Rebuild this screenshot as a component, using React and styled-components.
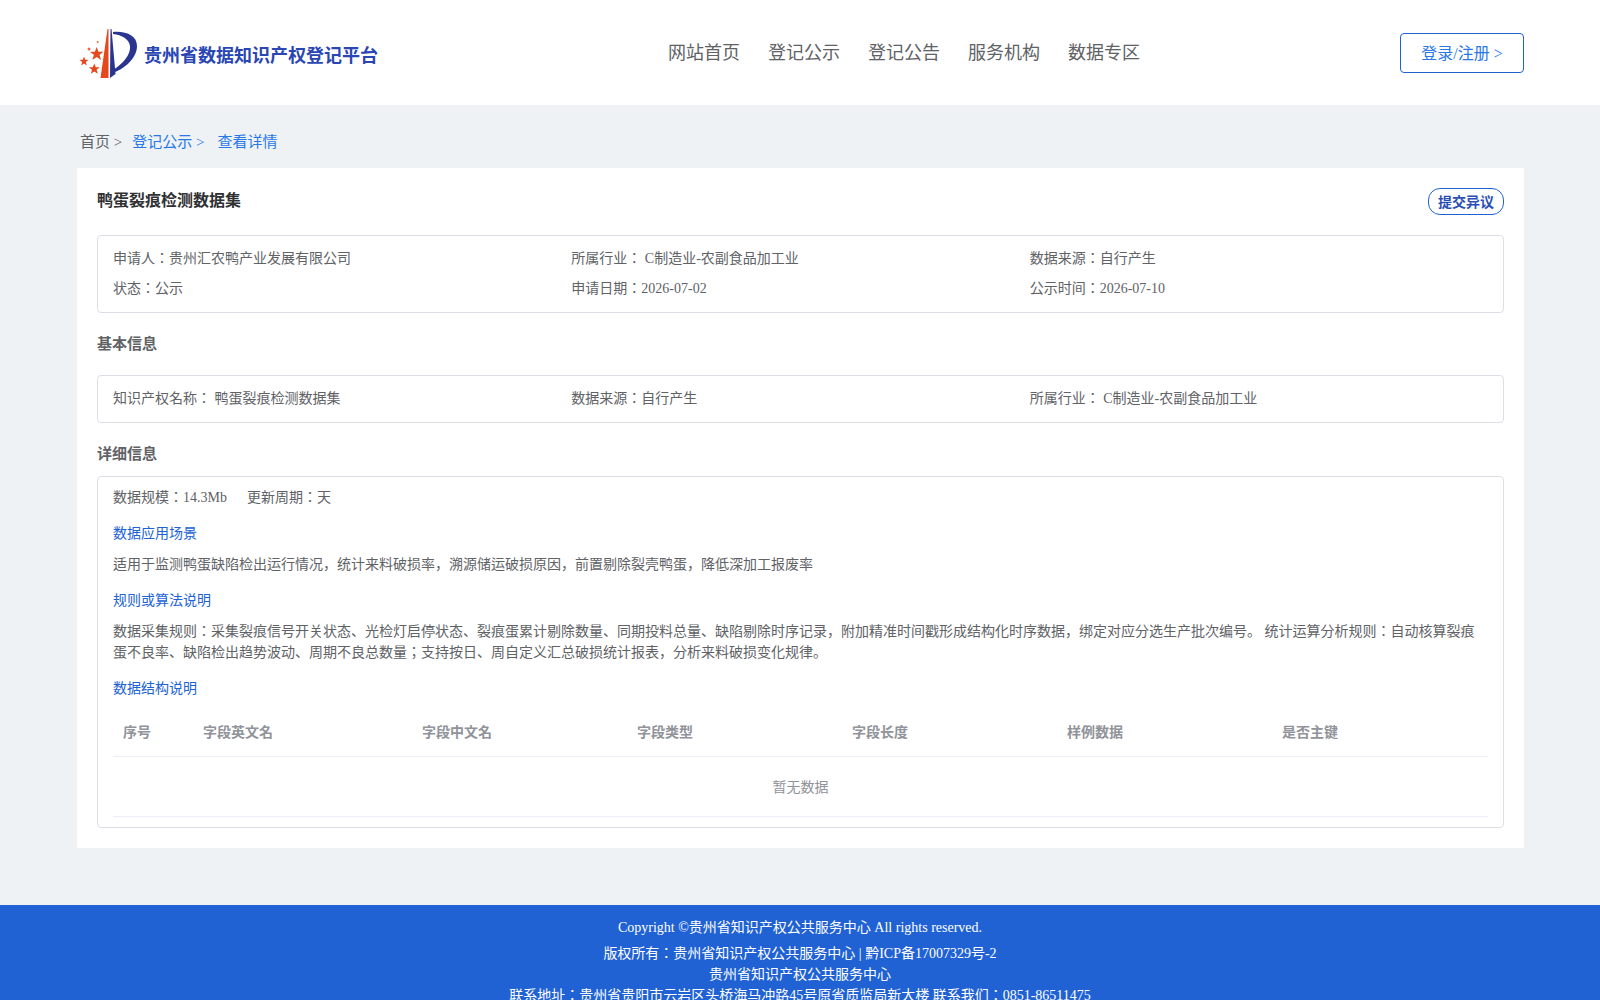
import styled, {createGlobalStyle} from 'styled-components';

const GlobalStyle = createGlobalStyle`
    html, body {
        margin: 0;
        padding: 0;
        height: 1000px;
        overflow: hidden;
        background: #eff2f5;
        font-family: "Liberation Serif", "Noto Sans CJK JP", serif;
        font-size: 14px;
        color: #606266;
    }
    * { box-sizing: border-box; }
`;

const Header = styled.header`
    height: 105px;
    background: #fff;
    padding: 0 76px;
    display: grid;
    grid-template-columns: 592px auto 1fr;
    align-items: center;
`;

const Brand = styled.div`
    display: flex;
    align-items: center;
    gap: 6px;
    padding-left: 2px;
    padding-top: 1px;
    font-family: "Liberation Sans", "Noto Sans CJK JP", sans-serif;
`;

const BrandName = styled.span`
    color: #2a46b4;
    font-size: 18px;
    font-weight: 700;
    margin-top: 2px;
`;

const Nav = styled.nav`
    display: flex;
    gap: 28px;
    margin-top: 2px;
`;

const NavLink = styled.a`
    font-size: 18px;
    color: #606266;
    line-height: 27px;
`;

const LoginButton = styled.button`
    justify-self: end;
    width: 124px;
    height: 40px;
    padding: 0 0 2px;
    background: #fff;
    border: 1px solid #2062d4;
    border-radius: 4px;
    color: #2878e8;
    font: inherit;
    font-size: 16px;
`;

const Main = styled.main`
    padding: 0 76px 0 77px;
    height: 800px;
`;

const Crumbs = styled.div`
    height: 63px;
    display: flex;
    align-items: center;
    padding: 11px 3px 0 3px;
    font-size: 15px;
    line-height: 20px;
`;

const Crumb = styled.span`
    color: ${p => (p.$active ? '#2878e8' : '#606266')};
    margin-right: ${p => p.$gap}px;
`;

const Card = styled.section`
    background: #fff;
    padding: 20px 20px 20px;
`;

const TitleRow = styled.div`
    display: flex;
    justify-content: space-between;
    align-items: flex-start;
    height: 47px;
`;

const Title = styled.h1`
    margin: 1px 0 0;
    font-size: 16px;
    line-height: 24px;
    font-weight: 700;
    color: #303133;
`;

const ObjectionButton = styled.button`
    width: 76px;
    height: 27px;
    padding: 0 0 2px;
    background: #fff;
    border: 1px solid #2062d4;
    border-radius: 12px;
    color: #2a4fb4;
    font: inherit;
    font-weight: 700;
`;

const InfoBox = styled.div`
    border: 1px solid #dcdfe6;
    border-radius: 4px;
    padding: ${p => p.$pad};
`;

const InfoRow = styled.div`
    display: grid;
    grid-template-columns: repeat(3, 1fr);
    line-height: 30px;
`;

const SectionTitle = styled.h2`
    margin: 0;
    font-size: 15px;
    font-weight: 700;
    color: #606266;
    line-height: 20px;
    padding: ${p => p.$pad};
`;

const MetaRow = styled.div`
    display: flex;
    gap: 20px;
    line-height: 20px;
    margin-top: 11px;
`;

const SubTitle = styled.div`
    color: #2062d4;
    line-height: 20px;
    margin-top: ${p => p.$top}px;
`;

const Paragraph = styled.p`
    margin: 10px 0 0;
    padding-right: 12px;
    line-height: 21px;
`;

const Table = styled.table`
    width: 100%;
    margin-top: 10px;
    border-collapse: collapse;
    table-layout: fixed;
`;

const Th = styled.th`
    height: 47px;
    padding: 0 10px 2px;
    text-align: left;
    font-weight: 700;
    color: #909399;
    border-bottom: 1px solid #ebeef5;
`;

const Empty = styled.td`
    height: 60px;
    text-align: center;
    color: #909399;
    border-bottom: 1px solid #ebeef5;
`;

const Footer = styled.footer`
    background: #2062d4;
    color: #fff;
    height: 95px;
    text-align: center;
    padding-top: 12px;
    line-height: 21px;
    overflow: hidden;
`;

const FooterLine = styled.div`
    margin-bottom: ${p => p.$gap || 0}px;
`;

function Logo() {
    return (
        <svg width="60" height="52" viewBox="0 0 60 52">
            <path d="M29.500 2 L30.500 2 L30.500 51 L22.500 51 Z" fill="#e4481c"/>
            <path d="M32.500 2 L33.500 2 L37.500 47 L32 51 Z" fill="#2a3590"/>
            <path d="M35 5 C49 4 59 9 59 19 C59 31 47 41 37 45 L36.500 42 C44 37 53 28 52 19 C51 12 44 8 35 7 Z" fill="#2a3590"/>
            <polygon points="18.700,20 20.500,24.700 25.500,24.700 21.500,27.700 23,33 18.700,30 14.400,33 15.900,27.700 12,24.700 16.900,24.700" fill="#e4481c"/>
            <polygon points="6,29.500 7.200,32.800 10.500,32.800 7.900,35 8.800,38.500 6,36.500 3.200,38.500 4.100,35 1.500,32.800 4.800,32.800" fill="#e4481c"/>
            <polygon points="16.300,36.500 17.800,40.300 21.800,40.300 18.600,42.800 19.700,46.700 16.300,44.500 12.900,46.700 14,42.800 10.800,40.300 14.800,40.300" fill="#e4481c"/>
            <circle cx="11" cy="22" r="1.500" fill="#ea6a45"/>
            <circle cx="19.700" cy="15" r="1" fill="#ea6a45"/>
        </svg>
    );
}

const columns = [
    {name: '序号', width: 80},
    {name: '字段英文名', width: 219},
    {name: '字段中文名', width: 215},
    {name: '字段类型', width: 215},
    {name: '字段长度', width: 215},
    {name: '样例数据', width: 215},
    {name: '是否主键', width: 216},
];

export default function App() {
    return (
        <>
            <GlobalStyle/>
            <Header>
                <Brand>
                    <Logo/>
                    <BrandName>贵州省数据知识产权登记平台</BrandName>
                </Brand>
                <Nav>
                    <NavLink>网站首页</NavLink>
                    <NavLink>登记公示</NavLink>
                    <NavLink>登记公告</NavLink>
                    <NavLink>服务机构</NavLink>
                    <NavLink>数据专区</NavLink>
                </Nav>
                <LoginButton>登录/注册 &gt;</LoginButton>
            </Header>
            <Main>
                <Crumbs>
                    <Crumb $gap={10}>首页 &gt;</Crumb>
                    <Crumb $active $gap={13}>登记公示 &gt;</Crumb>
                    <Crumb $active>查看详情</Crumb>
                </Crumbs>
                <Card>
                    <TitleRow>
                        <Title>鸭蛋裂痕检测数据集</Title>
                        <ObjectionButton>提交异议</ObjectionButton>
                    </TitleRow>
                    <InfoBox $pad="8px 15px">
                        <InfoRow>
                            <span>申请人：贵州汇农鸭产业发展有限公司</span>
                            <span>所属行业： C制造业-农副食品加工业</span>
                            <span>数据来源：自行产生</span>
                        </InfoRow>
                        <InfoRow>
                            <span>状态：公示</span>
                            <span>申请日期：2026-07-02</span>
                            <span>公示时间：2026-07-10</span>
                        </InfoRow>
                    </InfoBox>
                    <SectionTitle $pad="21px 0 21px">基本信息</SectionTitle>
                    <InfoBox $pad="8px 15px">
                        <InfoRow>
                            <span>知识产权名称： 鸭蛋裂痕检测数据集</span>
                            <span>数据来源：自行产生</span>
                            <span>所属行业： C制造业-农副食品加工业</span>
                        </InfoRow>
                    </InfoBox>
                    <SectionTitle $pad="21px 0 12px">详细信息</SectionTitle>
                    <InfoBox $pad="0 15px 10px">
                        <MetaRow>
                            <span>数据规模：14.3Mb</span>
                            <span>更新周期：天</span>
                        </MetaRow>
                        <SubTitle $top={16}>数据应用场景</SubTitle>
                        <Paragraph>适用于监测鸭蛋缺陷检出运行情况，统计来料破损率，溯源储运破损原因，前置剔除裂壳鸭蛋，降低深加工报废率</Paragraph>
                        <SubTitle $top={16}>规则或算法说明</SubTitle>
                        <Paragraph>数据采集规则：采集裂痕信号开关状态、光检灯启停状态、裂痕蛋累计剔除数量、同期投料总量、缺陷剔除时序记录，附加精准时间戳形成结构化时序数据，绑定对应分选生产批次编号。 统计运算分析规则：自动核算裂痕蛋不良率、缺陷检出趋势波动、周期不良总数量；支持按日、周自定义汇总破损统计报表，分析来料破损变化规律。</Paragraph>
                        <SubTitle $top={16}>数据结构说明</SubTitle>
                        <Table>
                            <colgroup>
                                {columns.map(col => <col key={col.name} width={col.width}/>)}
                            </colgroup>
                            <thead>
                                <tr>{columns.map(col => <Th key={col.name}>{col.name}</Th>)}</tr>
                            </thead>
                            <tbody>
                                <tr><Empty colSpan={7}>暂无数据</Empty></tr>
                            </tbody>
                        </Table>
                    </InfoBox>
                </Card>
            </Main>
            <Footer>
                <FooterLine $gap={5}>Copyright ©贵州省知识产权公共服务中心 All rights reserved.</FooterLine>
                <FooterLine>版权所有：贵州省知识产权公共服务中心 | 黔ICP备17007329号-2</FooterLine>
                <FooterLine>贵州省知识产权公共服务中心</FooterLine>
                <FooterLine>联系地址：贵州省贵阳市云岩区头桥海马冲路45号原省质监局新大楼 联系我们：0851-86511475</FooterLine>
            </Footer>
        </>
    );
}
